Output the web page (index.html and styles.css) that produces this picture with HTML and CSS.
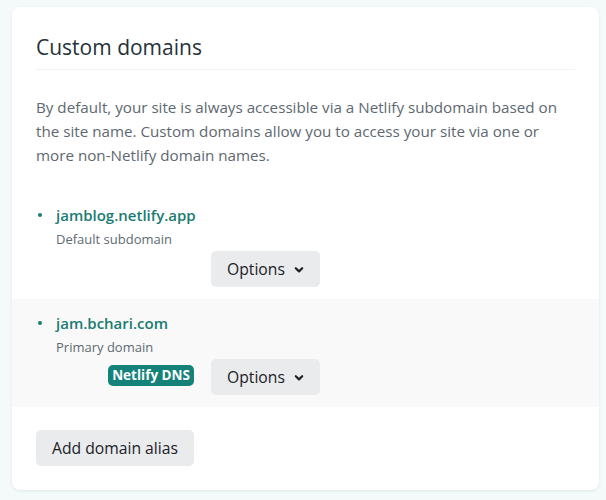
FILE: index.html
```html
<!DOCTYPE html>
<html lang="en">
<head>
<meta charset="utf-8">
<title>Custom domains</title>
<link rel="stylesheet" href="styles.css">
</head>
<body>
<section class="card">
  <header class="card-header">
    <h2 class="card-title">Custom domains</h2>
  </header>
  <p class="card-text">By default, your site is always accessible via a Netlify subdomain based on the site name. Custom domains allow you to access your site via one or more non-Netlify domain names.</p>
  <ul class="domain-list">
    <li class="domain-item">
      <div class="domain-name"><span class="dot"></span>jamblog.netlify.app</div>
      <div class="domain-sub">Default subdomain</div>
      <div class="domain-actions">
        <button class="btn btn-options">Options <svg class="chev" width="10" height="8" viewBox="0 0 10 8"><path d="M1.8 2.2 L5 5.4 L8.2 2.2" fill="none" stroke="#1f2328" stroke-width="2.2" stroke-linecap="round" stroke-linejoin="round"/></svg></button>
      </div>
    </li>
    <li class="domain-item domain-item-alt">
      <div class="domain-name"><span class="dot"></span>jam.bchari.com</div>
      <div class="domain-sub">Primary domain</div>
      <div class="domain-actions">
        <span class="badge">Netlify DNS</span>
        <button class="btn btn-options">Options <svg class="chev" width="10" height="8" viewBox="0 0 10 8"><path d="M1.8 2.2 L5 5.4 L8.2 2.2" fill="none" stroke="#1f2328" stroke-width="2.2" stroke-linecap="round" stroke-linejoin="round"/></svg></button>
      </div>
    </li>
  </ul>
  <div class="card-footer">
    <button class="btn">Add domain alias</button>
  </div>
</section>
</body>
</html>
```
FILE: styles.css
```css
* { box-sizing: border-box; }
html, body { margin: 0; padding: 0; }
body {
  background: #f4fafa;
  font-family: "Open Sans", "Noto Sans", sans-serif;
  color: #2e3a40;
  padding: 7px 7px 9px 12px;
}
.card {
  background: #ffffff;
  border-radius: 8px;
  box-shadow: 0 1px 3px rgba(30, 60, 70, 0.10);
  padding: 0 0 24px;
}
.card-header {
  margin: 0 24px;
  padding: 26px 0 8px;
  border-bottom: 1px solid #f1f2f3;
}
.card-title {
  margin: 0;
  font-size: 21px;
  line-height: 28px;
  font-weight: 400;
  color: #24323a;
}
.card-text {
  margin: 25px 24px 0;
  font-size: 15.2px;
  line-height: 24px;
  color: #5e6870;
}
.domain-list {
  list-style: none;
  margin: 24px 0 0;
  padding: 0;
}
.domain-item {
  padding: 12px 24px 12px 44px;
}
.domain-item-alt {
  background: #f9f9f9;
}
.domain-name {
  position: relative;
  font-size: 15px;
  line-height: 24px;
  font-weight: 600;
  color: #1a7b71;
}
.dot {
  position: absolute;
  left: -18px;
  top: 10px;
  width: 4px;
  height: 4px;
  border-radius: 50%;
  background: #1a7b71;
}
.domain-sub {
  font-size: 13px;
  line-height: 24px;
  color: #5f6a72;
}
.domain-actions {
  width: 264px;
  display: flex;
  justify-content: flex-end;
  align-items: center;
  gap: 17px;
}
.btn {
  font-family: inherit;
  font-size: 15.7px;
  font-weight: 500;
  color: #1c2126;
  background: #e9ebed;
  border: none;
  border-radius: 5px;
  height: 36px;
  padding: 0 16px;
  display: inline-flex;
  align-items: center;
  gap: 9px;
}
.btn-options {
  width: 109px;
}
.chev { display: block; margin-top: 1px; }
.badge {
  display: inline-block;
  background: #15827a;
  color: #ffffff;
  font-size: 13.5px;
  font-weight: 700;
  line-height: 21px;
  padding: 0 4px;
  border-radius: 5px;
  margin-top: -3px;
}
.card-footer {
  padding: 23px 24px 0;
}
.card-footer .btn {
  width: 158px;
}
```
